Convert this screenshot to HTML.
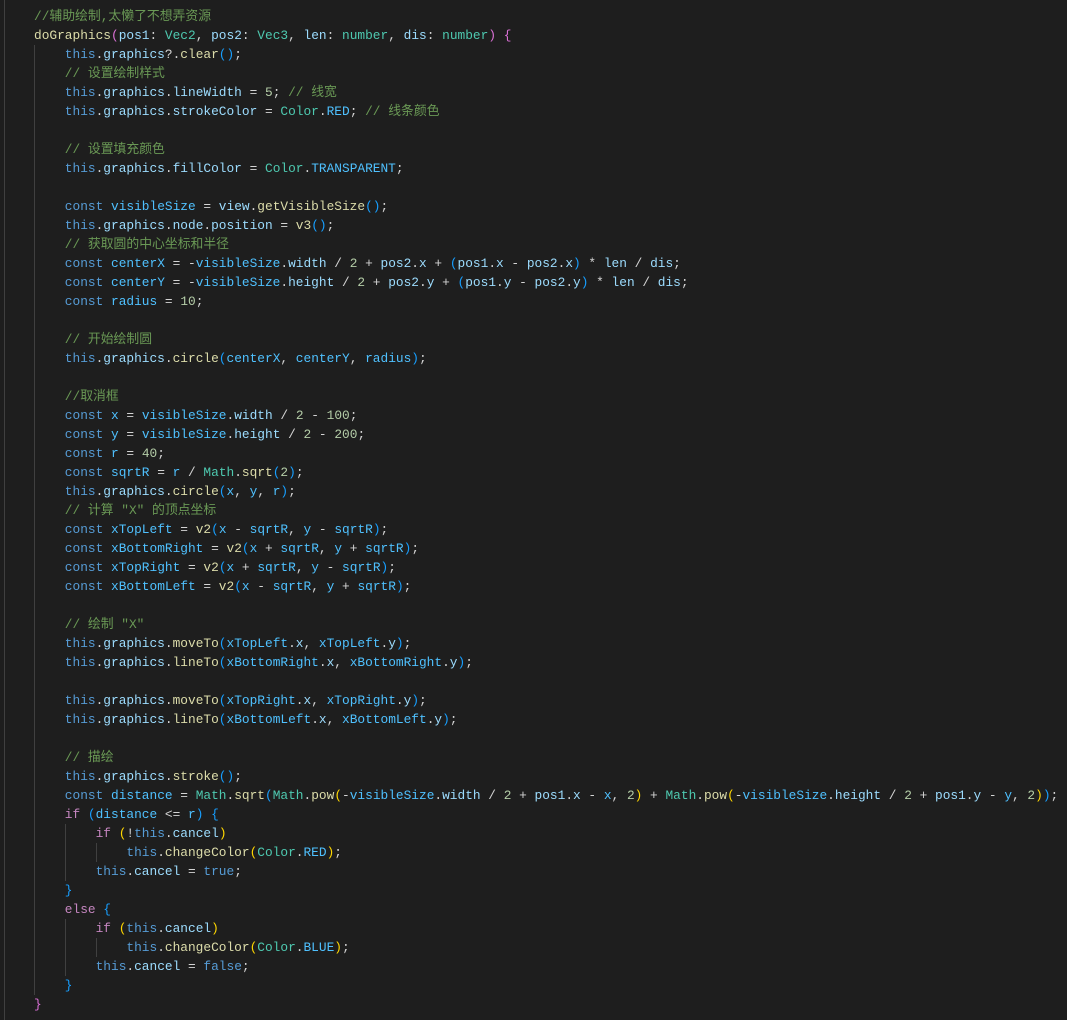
<!DOCTYPE html>
<html><head><meta charset="utf-8"><style>
html,body{margin:0;padding:0;background:#1e1e1e;width:1067px;height:1020px;overflow:hidden;position:relative}
#code{position:absolute;left:34px;top:7px;font-family:"Liberation Mono","Noto Sans CJK SC",monospace;font-size:12.83px;line-height:19px;color:#d4d4d4;white-space:pre}
.k{color:#569cd6}.c{color:#c586c0}.v{color:#9cdcfe}.f{color:#dcdcaa}.t{color:#4ec9b0}.n{color:#b5cea8}.m{color:#6a9955}.K{color:#4fc1ff}
.a{color:#ffd700}.b{color:#da70d6}.d{color:#179fff}
.g{position:absolute;width:1px;background:#404040}
</style></head><body>
<div class="g" style="left:4px;top:0;height:1020px"></div>
<div class="g" style="left:34px;top:45px;height:950px"></div>
<div class="g" style="left:65px;top:824px;height:57px"></div>
<div class="g" style="left:65px;top:919px;height:57px"></div>
<div class="g" style="left:96px;top:843px;height:19px"></div>
<div class="g" style="left:96px;top:938px;height:19px"></div>
<div id="code"><span class="m">//辅助绘制,太懒了不想弄资源</span>
<span class="f">doGraphics</span><span class="b">(</span><span class="v">pos1</span>: <span class="t">Vec2</span>, <span class="v">pos2</span>: <span class="t">Vec3</span>, <span class="v">len</span>: <span class="t">number</span>, <span class="v">dis</span>: <span class="t">number</span><span class="b">)</span> <span class="b">{</span>
    <span class="k">this</span>.<span class="v">graphics</span>?.<span class="f">clear</span><span class="d">()</span>;
    <span class="m">// 设置绘制样式</span>
    <span class="k">this</span>.<span class="v">graphics</span>.<span class="v">lineWidth</span> = <span class="n">5</span>; <span class="m">// 线宽</span>
    <span class="k">this</span>.<span class="v">graphics</span>.<span class="v">strokeColor</span> = <span class="t">Color</span>.<span class="K">RED</span>; <span class="m">// 线条颜色</span>

    <span class="m">// 设置填充颜色</span>
    <span class="k">this</span>.<span class="v">graphics</span>.<span class="v">fillColor</span> = <span class="t">Color</span>.<span class="K">TRANSPARENT</span>;

    <span class="k">const</span> <span class="K">visibleSize</span> = <span class="v">view</span>.<span class="f">getVisibleSize</span><span class="d">()</span>;
    <span class="k">this</span>.<span class="v">graphics</span>.<span class="v">node</span>.<span class="v">position</span> = <span class="f">v3</span><span class="d">()</span>;
    <span class="m">// 获取圆的中心坐标和半径</span>
    <span class="k">const</span> <span class="K">centerX</span> = -<span class="K">visibleSize</span>.<span class="v">width</span> / <span class="n">2</span> + <span class="v">pos2</span>.<span class="v">x</span> + <span class="d">(</span><span class="v">pos1</span>.<span class="v">x</span> - <span class="v">pos2</span>.<span class="v">x</span><span class="d">)</span> * <span class="v">len</span> / <span class="v">dis</span>;
    <span class="k">const</span> <span class="K">centerY</span> = -<span class="K">visibleSize</span>.<span class="v">height</span> / <span class="n">2</span> + <span class="v">pos2</span>.<span class="v">y</span> + <span class="d">(</span><span class="v">pos1</span>.<span class="v">y</span> - <span class="v">pos2</span>.<span class="v">y</span><span class="d">)</span> * <span class="v">len</span> / <span class="v">dis</span>;
    <span class="k">const</span> <span class="K">radius</span> = <span class="n">10</span>;

    <span class="m">// 开始绘制圆</span>
    <span class="k">this</span>.<span class="v">graphics</span>.<span class="f">circle</span><span class="d">(</span><span class="K">centerX</span>, <span class="K">centerY</span>, <span class="K">radius</span><span class="d">)</span>;

    <span class="m">//取消框</span>
    <span class="k">const</span> <span class="K">x</span> = <span class="K">visibleSize</span>.<span class="v">width</span> / <span class="n">2</span> - <span class="n">100</span>;
    <span class="k">const</span> <span class="K">y</span> = <span class="K">visibleSize</span>.<span class="v">height</span> / <span class="n">2</span> - <span class="n">200</span>;
    <span class="k">const</span> <span class="K">r</span> = <span class="n">40</span>;
    <span class="k">const</span> <span class="K">sqrtR</span> = <span class="K">r</span> / <span class="t">Math</span>.<span class="f">sqrt</span><span class="d">(</span><span class="n">2</span><span class="d">)</span>;
    <span class="k">this</span>.<span class="v">graphics</span>.<span class="f">circle</span><span class="d">(</span><span class="K">x</span>, <span class="K">y</span>, <span class="K">r</span><span class="d">)</span>;
    <span class="m">// 计算 "X" 的顶点坐标</span>
    <span class="k">const</span> <span class="K">xTopLeft</span> = <span class="f">v2</span><span class="d">(</span><span class="K">x</span> - <span class="K">sqrtR</span>, <span class="K">y</span> - <span class="K">sqrtR</span><span class="d">)</span>;
    <span class="k">const</span> <span class="K">xBottomRight</span> = <span class="f">v2</span><span class="d">(</span><span class="K">x</span> + <span class="K">sqrtR</span>, <span class="K">y</span> + <span class="K">sqrtR</span><span class="d">)</span>;
    <span class="k">const</span> <span class="K">xTopRight</span> = <span class="f">v2</span><span class="d">(</span><span class="K">x</span> + <span class="K">sqrtR</span>, <span class="K">y</span> - <span class="K">sqrtR</span><span class="d">)</span>;
    <span class="k">const</span> <span class="K">xBottomLeft</span> = <span class="f">v2</span><span class="d">(</span><span class="K">x</span> - <span class="K">sqrtR</span>, <span class="K">y</span> + <span class="K">sqrtR</span><span class="d">)</span>;

    <span class="m">// 绘制 "X"</span>
    <span class="k">this</span>.<span class="v">graphics</span>.<span class="f">moveTo</span><span class="d">(</span><span class="K">xTopLeft</span>.<span class="v">x</span>, <span class="K">xTopLeft</span>.<span class="v">y</span><span class="d">)</span>;
    <span class="k">this</span>.<span class="v">graphics</span>.<span class="f">lineTo</span><span class="d">(</span><span class="K">xBottomRight</span>.<span class="v">x</span>, <span class="K">xBottomRight</span>.<span class="v">y</span><span class="d">)</span>;

    <span class="k">this</span>.<span class="v">graphics</span>.<span class="f">moveTo</span><span class="d">(</span><span class="K">xTopRight</span>.<span class="v">x</span>, <span class="K">xTopRight</span>.<span class="v">y</span><span class="d">)</span>;
    <span class="k">this</span>.<span class="v">graphics</span>.<span class="f">lineTo</span><span class="d">(</span><span class="K">xBottomLeft</span>.<span class="v">x</span>, <span class="K">xBottomLeft</span>.<span class="v">y</span><span class="d">)</span>;

    <span class="m">// 描绘</span>
    <span class="k">this</span>.<span class="v">graphics</span>.<span class="f">stroke</span><span class="d">()</span>;
    <span class="k">const</span> <span class="K">distance</span> = <span class="t">Math</span>.<span class="f">sqrt</span><span class="d">(</span><span class="t">Math</span>.<span class="f">pow</span><span class="a">(</span>-<span class="K">visibleSize</span>.<span class="v">width</span> / <span class="n">2</span> + <span class="v">pos1</span>.<span class="v">x</span> - <span class="K">x</span>, <span class="n">2</span><span class="a">)</span> + <span class="t">Math</span>.<span class="f">pow</span><span class="a">(</span>-<span class="K">visibleSize</span>.<span class="v">height</span> / <span class="n">2</span> + <span class="v">pos1</span>.<span class="v">y</span> - <span class="K">y</span>, <span class="n">2</span><span class="a">)</span><span class="d">)</span>;
    <span class="c">if</span> <span class="d">(</span><span class="K">distance</span> &lt;= <span class="K">r</span><span class="d">)</span> <span class="d">{</span>
        <span class="c">if</span> <span class="a">(</span>!<span class="k">this</span>.<span class="v">cancel</span><span class="a">)</span>
            <span class="k">this</span>.<span class="f">changeColor</span><span class="a">(</span><span class="t">Color</span>.<span class="K">RED</span><span class="a">)</span>;
        <span class="k">this</span>.<span class="v">cancel</span> = <span class="k">true</span>;
    <span class="d">}</span>
    <span class="c">else</span> <span class="d">{</span>
        <span class="c">if</span> <span class="a">(</span><span class="k">this</span>.<span class="v">cancel</span><span class="a">)</span>
            <span class="k">this</span>.<span class="f">changeColor</span><span class="a">(</span><span class="t">Color</span>.<span class="K">BLUE</span><span class="a">)</span>;
        <span class="k">this</span>.<span class="v">cancel</span> = <span class="k">false</span>;
    <span class="d">}</span>
<span class="b">}</span></div>
</body></html>
